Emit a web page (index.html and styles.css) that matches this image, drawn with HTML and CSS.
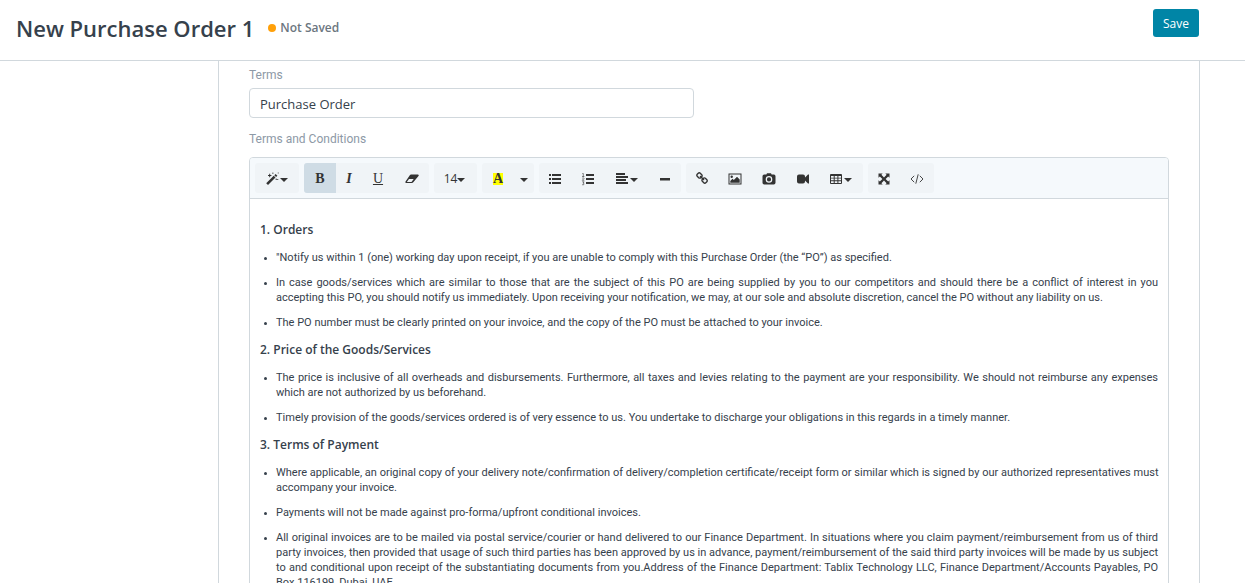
FILE: index.html
```html
<!DOCTYPE html>
<html lang="en">
<head>
<meta charset="utf-8">
<title>New Purchase Order 1</title>
<meta name="viewport" content="width=device-width, initial-scale=1">
<link rel="stylesheet" href="styles.css">
</head>
<body>
<header class="page-head">
  <h1 class="page-title">New Purchase Order 1</h1>
  <span class="indicator">Not Saved</span>
  <button type="button" class="btn-save">Save</button>
</header>
<main class="page-body">
  <form class="form-section">
    <label class="field-label" for="terms">Terms</label>
    <input class="field-input" id="terms" type="text" value="Purchase Order">
    <label class="field-label conditions-label" id="conditions-label">Terms and Conditions</label>
    <div class="editor">
      <div class="toolbar" role="toolbar" aria-label="Formatting">
        <div class="tool-group">
          <button type="button" class="tool with-caret with-caret-wide" aria-label="Style">
            <svg class="icon" viewBox="0 0 14 14"><path d="M1.200 11.300 8.700 3.800l1.800 1.800L3 13.100z"/><path d="m9.300 3.200 1.300-1.300 1.800 1.800-1.300 1.300z"/><path d="M3 3h1.200V1.800h1V3h1.200v1H5.200v1.200h-1V4H3zM7 .8h1.600v.8H7zM11.700 7h1.600v.8h-1.600zM12.800.6h.8v1h-.8zM10.700 6.400h.8V8h-.8z"/></svg><span class="caret"></span>
          </button>
        </div>
        <div class="tool-group">
          <button type="button" class="tool tool-active letter" aria-label="Bold" aria-pressed="true"><b>B</b></button>
          <button type="button" class="tool tool-narrow letter" aria-label="Italic"><i>I</i></button>
          <button type="button" class="tool letter" aria-label="Underline"><u>U</u></button>
          <button type="button" class="tool tool-wide" aria-label="Remove font style">
            <svg class="icon" viewBox="0 0 14 14"><path fill-rule="evenodd" d="M6 2.500h7q1 .2.700 1.200L8.500 10q-.7 1-1.700 1H1Q0 10.700.4 9.700L4.800 3.300Q5.300 2.600 6 2.500zM1.800 10h4.700l2.200-2.900H4z"/></svg>
          </button>
        </div>
        <div class="tool-group">
          <button type="button" class="tool with-caret" aria-label="Font size">14<span class="caret"></span></button>
        </div>
        <div class="tool-group">
          <button type="button" class="tool letter" aria-label="Recent color"><b class="swatch">A</b></button>
          <button type="button" class="tool tool-drop" aria-label="More colors"><span class="caret"></span></button>
        </div>
        <div class="tool-group">
          <button type="button" class="tool" aria-label="Unordered list">
            <svg class="icon" viewBox="0 0 14 14"><path d="M1 2h2v2H1zM1 6h2v2H1zM1 10h2v2H1zM4 2h9v2H4zM4 6h9v2H4zM4 10h9v2H4z"/></svg>
          </button>
          <button type="button" class="tool tool-mid" aria-label="Ordered list">
            <svg class="icon" viewBox="0 0 14 14"><path d="M5 2h8v2H5zM5 6h8v2H5zM5 10h8v2H5z"/><path class="fine" d="M1.300 1.500h1v3M1 4.500h2.400M1.200 6.200Q3 5.300 3 6.500L1.300 8.300h2M1.200 9.800h1.900l-1 1.300q1.300.2.900 1.300-.7.700-1.900.3"/></svg>
          </button>
          <button type="button" class="tool with-caret with-caret-wide" aria-label="Paragraph">
            <svg class="icon" viewBox="0 0 14 14"><path d="M1 1h9v2H1zM1 4h12v2H1zM1 7h10v2H1zM1 10h12v2H1z"/></svg><span class="caret"></span>
          </button>
          <button type="button" class="tool" aria-label="Horizontal rule">
            <svg class="icon" viewBox="0 0 14 14"><path d="M2 6h10v2.500H2z"/></svg>
          </button>
        </div>
        <div class="tool-group">
          <button type="button" class="tool" aria-label="Link">
            <svg class="icon icon-small" viewBox="0 0 1792 1792"><path d="M1456 1216q0-40-28-68l-208-208q-28-28-68-28-42 0-72 32 3 3 19 18.500t21.500 21.500 15 19 13 25.500 3.500 27.500q0 40-28 68t-68 28q-15 0-27.500-3.500t-25.500-13-19-15-21.500-21.500-18.500-19q-33 31-33 73 0 40 28 68l206 207q27 27 68 27 40 0 68-26l147-146q28-28 28-67zm-703-705q0-40-28-68l-206-207q-28-28-68-28-39 0-68 27l-147 146q-28 28-28 67 0 40 28 68l208 208q27 27 68 27 42 0 72-31-3-3-19-18.500t-21.500-21.500-15-19-13-25.500-3.500-27.500q0-40 28-68t68-28q15 0 27.500 3.500t25.500 13 19 15 21.500 21.500 18.500 19q33-31 33-73zm895 705q0 120-85 203l-147 146q-83 83-203 83-121 0-204-85l-206-207q-83-83-83-203 0-123 88-209l-88-88q-86 88-208 88-120 0-204-84l-208-208q-84-84-84-204t85-203l147-146q83-83 203-83 121 0 204 85l206 207q83 83 83 203 0 123-88 209l88 88q86-88 208-88 120 0 204 84l208 208q84 84 84 204z"/></svg>
          </button>
          <button type="button" class="tool tool-mid" aria-label="Picture">
            <svg class="icon" viewBox="0 0 14 14"><path fill-rule="evenodd" d="M.5 1.500h13v11H.5zM1.500 2.500v9h11v-9z"/><circle cx="3.700" cy="4.700" r="1.200"/><path d="M2.300 10.700V9L4.500 6.800l1.300 1.300L9 4.800l2.700 2.700v3.200z"/></svg>
          </button>
          <button type="button" class="tool tool-mid" aria-label="Camera">
            <svg class="icon" viewBox="0 0 14 14"><path fill-rule="evenodd" d="M4.400 2.500 5 1.300h4l.6 1.200h2.300q1.600.2 1.600 1.700v6.600q-.1 1.600-1.700 1.700H2.200Q.6 12.400.5 10.800V4.200Q.6 2.600 2.200 2.500zM7 4.100a3.300 3.300 0 1 0 0 6.600 3.300 3.300 0 0 0 0-6.600zm0 1.200a2.100 2.100 0 1 1 0 4.200 2.100 2.100 0 0 1 0-4.200z"/></svg>
          </button>
          <button type="button" class="tool tool-mid" aria-label="Video">
            <svg class="icon" viewBox="0 0 14 14"><path d="M3 2.500h4q2 0 2 2v1l3-3h1v9h-1l-3-3v1q0 2-2 2H3q-2 0-2-2v-5q0-2 2-2z"/></svg>
          </button>
          <button type="button" class="tool with-caret" aria-label="Table">
            <svg class="icon" viewBox="0 0 14 14"><path fill-rule="evenodd" d="M2 2h10q1 0 1 1v8q0 1-1 1H2q-1 0-1-1V3q0-1 1-1zm0 2v1.700h2.700V4zm3.700 0v1.700h2.700V4zm3.700 0v1.700H12V4zM2 6.600v1.700h2.700V6.600zm3.700 0v1.700h2.700V6.600zm3.700 0v1.700H12V6.600zM2 9.200V11h2.700V9.200zm3.700 0V11h2.700V9.200zm3.700 0V11H12V9.200z"/></svg><span class="caret"></span>
          </button>
        </div>
        <div class="tool-group">
          <button type="button" class="tool" aria-label="Full screen">
            <svg class="icon" viewBox="0 0 14 14"><path d="M1.500 1.500h4.200L4.400 2.800 7 5.400l2.600-2.600-1.300-1.300h4.200v4.200l-1.300-1.300L8.600 7l2.600 2.600 1.300-1.300v4.200H8.300l1.300-1.300L7 8.600l-2.600 2.600 1.300 1.300H1.500V8.300l1.300 1.300L5.400 7 2.800 4.400 1.500 5.700z"/></svg>
          </button>
          <button type="button" class="tool tool-mid" aria-label="Code view">
            <svg class="icon" viewBox="0 0 14 14"><path class="line" d="M4.200 3.800 1 7l3.200 3.200M9.800 3.800 13 7l-3.200 3.200M8.200 2.300 5.800 11.700"/></svg>
          </button>
        </div>
      </div>
      <div class="editable" contenteditable="true" spellcheck="false" role="textbox" aria-multiline="true" aria-labelledby="conditions-label">
        <h2>1. Orders</h2>
        <ul>
          <li>"Notify us within 1 (one) working day upon receipt, if you are unable to comply with this Purchase Order (the “PO”) as specified.</li>
          <li>In case goods/services which are similar to those that are the subject of this PO are being supplied by you to our competitors and should there be a conflict of interest in you accepting this PO, you should notify us immediately. Upon receiving your notification, we may, at our sole and absolute discretion, cancel the PO without any liability on us.</li>
          <li>The PO number must be clearly printed on your invoice, and the copy of the PO must be attached to your invoice.</li>
        </ul>
        <h2>2. Price of the Goods/Services</h2>
        <ul>
          <li>The price is inclusive of all overheads and disbursements. Furthermore, all taxes and levies relating to the payment are your responsibility. We should not reimburse any expenses which are not authorized by us beforehand.</li>
          <li>Timely provision of the goods/services ordered is of very essence to us. You undertake to discharge your obligations in this regards in a timely manner.</li>
        </ul>
        <h2>3. Terms of Payment</h2>
        <ul>
          <li><span class="one-line">Where applicable, an original copy of your delivery note/confirmation of delivery/completion certificate/receipt form or similar which is signed by our authorized representatives must</span> accompany your invoice.</li>
          <li>Payments will not be made against pro-forma/upfront conditional invoices.</li>
          <li>All original invoices are to be mailed via postal service/courier or hand delivered to our Finance Department. In situations where you claim payment/reimbursement from us of third party invoices, then provided that usage of such third parties has been approved by us in advance, payment/reimbursement of the said third party invoices will be made by us subject to and conditional upon receipt of the substantiating documents from you.Address of the Finance Department: Tablix Technology LLC, Finance Department/Accounts Payables, PO Box 116199, Dubai, UAE.</li>
        </ul>
      </div>
    </div>
  </form>
</main>
</body>
</html>
```
FILE: styles.css
```css
* { box-sizing: border-box; }
body {
  margin: 0;
  height: 100vh;
  display: flex;
  flex-direction: column;
  overflow: hidden;
  background: #fff;
  color: #36414c;
  font-family: "Open Sans", "Noto Sans", sans-serif;
  font-size: 12px;
}
button, input { font-family: inherit; }
.page-head {
  display: flex;
  align-items: flex-start;
  flex: none;
  padding: 9px 46px 13px 16px;
  border-bottom: 1px solid #d1d8dd;
}
.page-title {
  margin: 0;
  font-size: 22px;
  line-height: 38px;
  font-weight: 600;
}
.indicator {
  display: flex;
  align-items: center;
  gap: 4px;
  margin-left: 14px;
  line-height: 38px;
  font-weight: 600;
  color: #6c7680;
}
.indicator::before {
  content: "";
  width: 8px;
  height: 8px;
  border-radius: 50%;
  background: #ffa00a;
}
.btn-save {
  margin-left: auto;
  padding: 0 10px;
  height: 28px;
  border: 0;
  border-radius: 3px;
  background: #0085a6;
  color: #fff;
  font-size: 12px;
}
.page-body {
  flex: 1;
  min-height: 0;
  overflow: hidden;
  padding: 0 45px 0 218px;
}
.form-section {
  display: flex;
  flex-direction: column;
  min-height: 100%;
  padding: 6px 30px;
  border: solid #d1d8dd;
  border-width: 0 1px;
}
.field-label {
  color: #8d99a6;
  font-family: Roboto, sans-serif;
  line-height: 16px;
  margin-bottom: 5px;
}
.field-input {
  width: 50%;
  max-width: 445px;
  height: 30px;
  padding: 2px 10px 0;
  border: 1px solid #d1d8dd;
  border-radius: 4px;
  color: #36414c;
  font-size: 13px;
}
.conditions-label {
  margin-top: 13px;
  margin-bottom: 10px;
}
.editor {
  border: 1px solid #d1d8dd;
  border-radius: 4px 4px 0 0;
}
.toolbar {
  display: flex;
  flex-wrap: wrap;
  gap: 5px;
  padding: 5px;
  border-bottom: 1px solid #d1d8dd;
  border-radius: 3px 3px 0 0;
  background: #f5f9fc;
}
.tool-group {
  display: flex;
  border-radius: 3px;
  overflow: hidden;
  background: #f0f4f7;
}
.tool {
  display: flex;
  align-items: center;
  justify-content: center;
  width: 32px;
  height: 30px;
  padding: 1px 0 0;
  border: 0;
  background: none;
  color: #333;
  font-size: 12px;
}
.tool-active { background: #cfdce5; }
.tool-narrow { width: 26px; }
.tool-mid { width: 34px; }
.tool-wide { width: 35px; }
.tool-drop { width: 20px; }
.with-caret {
  width: 43px;
  padding-right: 2px;
}
.with-caret-wide { width: 44px; }
.letter {
  padding-top: 2px;
  font-family: "Liberation Serif", serif;
  font-size: 14px;
}
.letter i { font-weight: bold; }
.swatch {
  line-height: 12px;
  background: #ff0;
}
.icon {
  width: 14px;
  height: 14px;
  fill: #333;
}
.icon-small {
  width: 13px;
  height: 13px;
}
.fine, .line {
  fill: none;
  stroke: #333;
}
.fine { stroke-width: 0.6; }
.line { stroke-width: 0.9; }
.caret {
  margin-top: 2px;
  border: 4px solid transparent;
  border-top-color: #333;
  border-bottom: 0;
}
.icon + .caret { margin-left: 1px; }
.editable {
  padding: 11px 10px 10px;
  outline: 0;
  font-size: 11px;
  line-height: 15px;
  text-align: justify;
}
.editable h2 {
  margin: 12px 0 13px;
  font-size: 12px;
  line-height: 15px;
  font-weight: 600;
}
.editable ul {
  margin: 0;
  padding-left: 16px;
  font-family: Roboto, sans-serif;
}
.editable li { margin-bottom: 10px; }
.editable li::marker { font-size: 9px; }
.one-line { white-space: nowrap; }
```
